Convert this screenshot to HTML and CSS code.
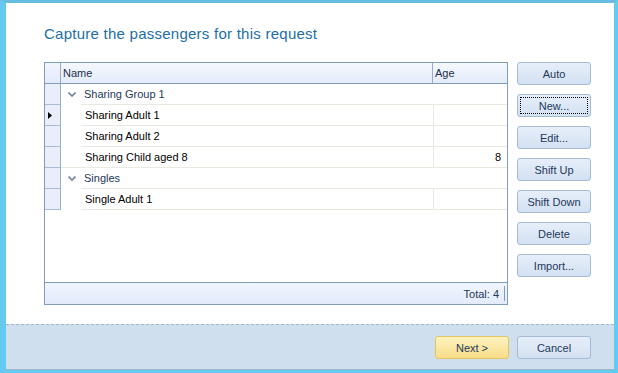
FILE: index.html
```html
<!DOCTYPE html>
<html lang="en">
<head>
  <meta charset="UTF-8">
  <title>Passengers</title>
  <link rel="stylesheet" href="styles.css">
</head>
<body>
  <div class="window">
    <div class="content">
      <h1 class="title">Capture the passengers for this request</h1>

      <div class="main">
        <div class="grid">
          <div class="grid-head">
            <div class="ind"></div>
            <div class="head-name">Name</div>
            <div class="head-age">Age</div>
          </div>

          <div class="grid-body">
            <div class="row group first">
              <div class="ind"></div>
              <div class="group-cell">
                <svg class="chev" width="8" height="5" viewBox="0 0 8 5"><polyline points="0.5,0.5 4,4 7.5,0.5" fill="none" stroke="#6f819d" stroke-width="1.6"/></svg>
                Sharing Group 1
              </div>
            </div>
            <div class="row item">
              <div class="ind">
                <svg class="arrow" width="4" height="7" viewBox="0 0 4 7"><polygon points="0,0 4,3.5 0,7" fill="#000"/></svg>
              </div>
              <div class="indent"></div>
              <div class="cell name">Sharing Adult 1</div>
              <div class="cell age"></div>
            </div>
            <div class="row item">
              <div class="ind"></div>
              <div class="indent"></div>
              <div class="cell name">Sharing Adult 2</div>
              <div class="cell age"></div>
            </div>
            <div class="row item">
              <div class="ind"></div>
              <div class="indent"></div>
              <div class="cell name">Sharing Child aged 8</div>
              <div class="cell age">8</div>
            </div>
            <div class="row group">
              <div class="ind"></div>
              <div class="group-cell">
                <svg class="chev" width="8" height="5" viewBox="0 0 8 5"><polyline points="0.5,0.5 4,4 7.5,0.5" fill="none" stroke="#6f819d" stroke-width="1.6"/></svg>
                Singles
              </div>
            </div>
            <div class="row item last">
              <div class="ind"></div>
              <div class="indent"></div>
              <div class="cell name">Single Adult 1</div>
              <div class="cell age"></div>
            </div>
          </div>

          <div class="grid-foot">
            <span>Total: 4</span>
            <span class="sep"></span>
          </div>
        </div>

        <div class="side">
          <button class="btn">Auto</button>
          <button class="btn focused"><span>New...</span></button>
          <button class="btn">Edit...</button>
          <button class="btn">Shift Up</button>
          <button class="btn">Shift Down</button>
          <button class="btn">Delete</button>
          <button class="btn">Import...</button>
        </div>
      </div>
    </div>

    <div class="footer">
      <button class="btn primary">Next &gt;</button>
      <button class="btn">Cancel</button>
    </div>
  </div>
</body>
</html>
```

FILE: styles.css
```css
body {
  margin: 0;
  background: #64caef;
  font-family: "Liberation Sans", Arial, sans-serif;
  font-size: 11px;
  color: #000;
}

.window {
  width: 618px;
  height: 373px;
  box-sizing: border-box;
  border-left: 6px solid #64caef;
  border-right: 4px solid #64caef;
  border-top: 3px solid #6abde2;
  border-bottom: 3px solid #64caef;
  display: flex;
  flex-direction: column;
}

.content {
  background: #fff;
  height: 321px;
  box-sizing: border-box;
  padding: 22px 0 0 38px;
}

.title {
  margin: 0 0 19px;
  font-size: 15px;
  line-height: 18px;
  font-weight: normal;
  letter-spacing: 0.25px;
  color: #1d6ea8;
}

.main {
  display: flex;
  align-items: flex-start;
}

/* grid */
.grid {
  width: 464px;
  height: 243px;
  box-sizing: border-box;
  border: 1px solid #7f9db9;
  display: flex;
  flex-direction: column;
}

.ind {
  width: 15px;
  flex: none;
  background: #e9eef9;
  border-right: 1px solid #97acca;
}

.grid-head {
  display: flex;
  height: 21px;
  box-sizing: border-box;
  border-bottom: 1px solid #7f9db9;
  background: linear-gradient(#f5f8fe, #e3ebfa);
  color: #1e2f4b;
  line-height: 20px;
}

.grid-head .ind {
  background: linear-gradient(#f1f5fd, #e3ebfa);
}

.head-name {
  width: 372px;
  border-right: 1px solid #97acca;
  padding-left: 2px;
  box-sizing: border-box;
  flex: none;
}

.head-age {
  flex: 1;
  padding-left: 2px;
}

.grid-body {
  flex: 1;
}

.row {
  display: flex;
  height: 21px;
  box-sizing: border-box;
  line-height: 20px;
}

.row > div {
  border-top: 1px solid #e9e8e1;
}

.row > .ind {
  border-top-color: #a8bad4;
}

.row.first {
  height: 20px;
}

.row.first > div {
  border-top: none;
}

.row.last {
  height: 22px;
}

.row.last > div {
  border-bottom: 1px solid #e9e8e1;
}

.row.last > .ind {
  border-bottom-color: #a8bad4;
}

.row > .indent {
  width: 20px;
  flex: none;
  border-top: none;
}

.row.last > .indent {
  border-bottom: none;
}

.group-cell {
  flex: 1;
  padding-left: 7px;
  color: #1e395b;
  display: flex;
  align-items: center;
  gap: 8px;
}

.chev {
  margin-top: 1px;
}

.arrow {
  display: block;
  margin: 7px 0 0 3px;
}

.cell.name {
  flex: 1;
  padding-left: 4px;
}

.cell.age {
  width: 74px;
  flex: none;
  border-left: 1px solid #e9e8e1;
  text-align: right;
  padding-right: 6px;
  box-sizing: border-box;
}

.grid-foot {
  height: 22px;
  box-sizing: border-box;
  border-top: 1px solid #7f9db9;
  background: linear-gradient(#f0f6fe, #e3ebfb);
  display: flex;
  align-items: center;
  justify-content: flex-end;
  color: #1e395b;
  padding-right: 2px;
}

.sep {
  width: 1px;
  height: 15px;
  background: #7f9db9;
  margin-left: 5px;
}

/* buttons */
.side {
  display: flex;
  flex-direction: column;
  gap: 9px;
  margin-left: 9px;
}

.btn {
  width: 74px;
  height: 23px;
  padding: 0;
  border: 1px solid #a6b9d5;
  border-radius: 3px;
  background: linear-gradient(#e6eefa, #d4e1f2);
  font-family: "Liberation Sans", Arial, sans-serif;
  font-size: 11px;
  color: #1e395b;
  position: relative;
}

.btn.focused::after {
  content: "";
  position: absolute;
  inset: 2px;
  border: 1px dotted #000;
}

.btn.primary {
  border-color: #e3c662;
  background: linear-gradient(#fdf3c0, #f8dc88);
}

.footer {
  flex: 1;
  background: #cfdfee;
  border-top: 1px dashed #a4b5cf;
  border-bottom: 1px solid #9db6cc;
  display: flex;
  justify-content: flex-end;
  align-items: flex-start;
  gap: 8px;
  padding: 11px 23px 0 0;
}
```
